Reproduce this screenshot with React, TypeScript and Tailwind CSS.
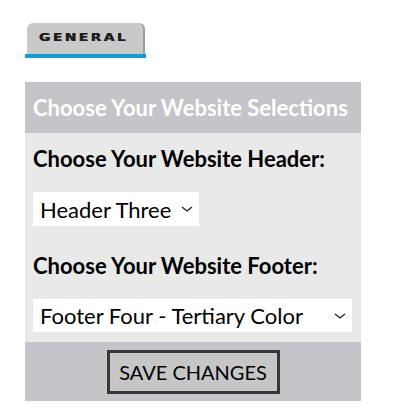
import { useState } from "react";

function Chevron() {
  return (
    <svg
      className="pointer-events-none absolute right-[6px] top-1/2 -translate-y-1/2"
      width="12"
      height="6"
      viewBox="0 0 12 6"
      fill="none"
    >
      <path d="M1 1l5 4 5-4" stroke="#222" strokeWidth="1.3" />
    </svg>
  );
}

export default function App() {
  const [header, setHeader] = useState("Header Three");
  const [footer, setFooter] = useState("Footer Four - Tertiary Color");

  return (
    <main className="min-h-[416px] bg-white pt-[23px] font-['Lato',sans-serif]">
      <div className="ml-[25px] w-[121px] border-b-4 border-[#1a9ad3]">
        <div className="ml-[2px] mr-[1px] flex h-[31px] items-center justify-center rounded-t-[6px] border-r-2 border-[#9d9d9d] bg-[#c9c9c9]">
          <span className="inline-block scale-x-125 pr-[2px] font-['DejaVu_Sans',sans-serif] text-[11px] font-black tracking-[2px] text-[#1e1e1e] [text-shadow:0.5px_0_0_#1e1e1e]">
            GENERAL
          </span>
        </div>
      </div>

      <section className="ml-[25px] mt-[24px] w-[336px] bg-[#e9e9e9]">
        <h2 className="flex h-[51px] items-center bg-[#c4c4c9] px-[8px] text-[22px] font-bold text-white">
          Choose Your Website Selections
        </h2>

        <div className="px-[8px] pb-[10px] pt-[12px]">
          <label className="block text-[22px] font-bold leading-[28px] text-black">
            Choose Your Website Header:
          </label>

          <div className="relative mt-[19px] w-[166px]">
            <select
              value={header}
              onChange={(e) => setHeader(e.target.value)}
              className="h-[34px] w-full appearance-none bg-white pl-[7px] text-[22px] text-black outline-none"
            >
              <option>Header One</option>
              <option>Header Two</option>
              <option>Header Three</option>
            </select>
            <Chevron />
          </div>

          <label className="mt-[26px] block text-[22px] font-bold leading-[28px] text-black">
            Choose Your Website Footer:
          </label>

          <div className="relative mt-[19px] w-[319px]">
            <select
              value={footer}
              onChange={(e) => setFooter(e.target.value)}
              className="h-[33px] w-full appearance-none bg-white pl-[7px] text-[22px] text-black outline-none"
            >
              <option>Footer One</option>
              <option>Footer Two</option>
              <option>Footer Three</option>
              <option>Footer Four - Tertiary Color</option>
            </select>
            <Chevron />
          </div>
        </div>

        <div className="flex h-[59px] items-center justify-center bg-[#c4c4c9]">
          <button
            type="button"
            className="h-[44px] w-[173px] border-[3px] border-[#383838] bg-[#c6c6c6] text-[20px] text-black"
          >
            SAVE CHANGES
          </button>
        </div>
      </section>
    </main>
  );
}
